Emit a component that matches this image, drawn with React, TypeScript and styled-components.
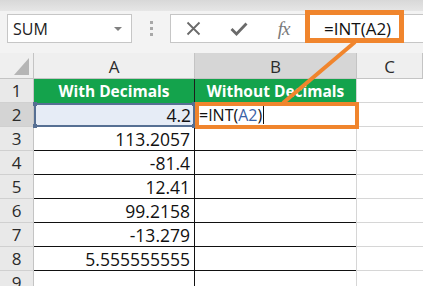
import React from 'react';
import styled, { createGlobalStyle } from 'styled-components';

const Global = createGlobalStyle`
  html, body { margin: 0; padding: 0; background: #fff; overflow: hidden; }
  body { font-family: "Open Sans", "Liberation Sans", sans-serif; }
`;

const ORANGE = '#f0852d';
const GREEN = '#14a34c';

const Screen = styled.div`
  position: relative;
  width: 423px;
  height: 286px;
  overflow: hidden;
  background: #fff;
  display: flex;
  flex-direction: column;
`;

const TopStrip = styled.div`
  height: 11px;
  flex: none;
  background: linear-gradient(#d8d8d8, #e6e6e6);
`;

const FormulaBar = styled.div`
  height: 42px;
  flex: none;
  box-sizing: border-box;
  padding-top: 3px;
  background: #f3f3f3;
  display: flex;
  align-items: flex-start;
`;

const NameBox = styled.div`
  margin-left: 7px;
  width: 125px;
  height: 29px;
  box-sizing: border-box;
  border: 1px solid #c6c6c6;
  background: #fff;
  display: flex;
  align-items: center;
  justify-content: space-between;
  padding: 0 9px 0 5px;
  font-size: 16px;
  color: #222;
`;

const DropArrow = styled.span`
  width: 0;
  height: 0;
  border-left: 4px solid transparent;
  border-right: 4px solid transparent;
  border-top: 4px solid #808080;
`;

const Grip = styled.div`
  width: 38px;
  height: 29px;
  display: flex;
  flex-direction: column;
  align-items: center;
  justify-content: center;
  gap: 3px;
`;

const Dot = styled.span`
  width: 3px;
  height: 3px;
  background: #a8a8a8;
`;

const FormulaBox = styled.div`
  flex: 1;
  height: 29px;
  box-sizing: border-box;
  border: 1px solid #c6c6c6;
  border-right: none;
  background: #fff;
  display: flex;
  align-items: center;
`;

const IconBtn = styled.div`
  width: 45px;
  height: 27px;
  display: flex;
  align-items: center;
  justify-content: center;
  color: #6e6e6e;
`;

const Fx = styled.span`
  font-family: "Liberation Serif", "DejaVu Serif", serif;
  font-style: italic;
  font-size: 19px;
  color: #7a7a7a;
  letter-spacing: -1px;
`;

const FormulaText = styled.div`
  padding-left: 18px;
  font-size: 17px;
  color: #111;
`;

const Sheet = styled.div`
  position: relative;
  flex: 1;
  display: grid;
  grid-template-columns: 34px 161px 162px 1fr;
  grid-template-rows: 26px;
  grid-auto-rows: 24px;
`;

const Corner = styled.div`
  position: relative;
  background: #efefef;
  border-right: 1px solid #c4c4c4;
  border-bottom: 1px solid #c4c4c4;
  box-sizing: border-box;
  &::after {
    content: '';
    position: absolute;
    right: 4px;
    bottom: 3px;
    width: 15px;
    height: 17px;
    background: #b5b5b5;
    clip-path: polygon(100% 0, 100% 100%, 0 100%);
  }
`;

const ColHead = styled.div<{ $sel?: boolean }>`
  box-sizing: border-box;
  background: ${(p) => (p.$sel ? '#d6d6d6' : '#efefef')};
  border-right: 1px solid #c4c4c4;
  border-bottom: 1px solid #c4c4c4;
  display: flex;
  align-items: center;
  justify-content: center;
  font-size: 17px;
  color: #2b2b2b;
  padding-top: 1px;
`;

const RowHead = styled.div<{ $sel?: boolean }>`
  box-sizing: border-box;
  background: ${(p) => (p.$sel ? '#d4d4d4' : '#e9e9e9')};
  border-right: 1px solid #c4c4c4;
  border-bottom: 1px solid #d0d0d0;
  display: flex;
  align-items: center;
  justify-content: center;
  font-size: 17px;
  color: #2b2b2b;
`;

const TitleCell = styled.div`
  box-sizing: border-box;
  background: ${GREEN};
  border-right: 1px solid #1d1d1d;
  color: #fff;
  font-weight: 700;
  font-size: 15.5px;
  display: flex;
  align-items: center;
  justify-content: center;
`;

const DataCell = styled.div`
  box-sizing: border-box;
  border-right: 1px solid #111;
  border-bottom: 1px solid #111;
  display: flex;
  align-items: center;
  justify-content: flex-end;
  padding-right: 4px;
  font-size: 17.5px;
  color: #111;
`;

const RefCell = styled.div`
  position: relative;
  box-sizing: border-box;
  background: #e6ecf6;
  border: 2px solid #566f93;
  display: flex;
  align-items: center;
  justify-content: flex-end;
  padding-right: 2px;
  font-size: 17.5px;
  color: #111;
`;

const Handle = styled.span<{ $x: 'left' | 'right'; $y: 'top' | 'bottom' }>`
  position: absolute;
  width: 4px;
  height: 4px;
  background: #566f93;
  ${(p) => p.$x}: -3px;
  ${(p) => p.$y}: -3px;
`;

const EditCell = styled.div`
  box-sizing: border-box;
  border-right: 1px solid #111;
  display: flex;
  align-items: center;
  padding-left: 4px;
  font-size: 16px;
  color: #111;
`;

const Ref = styled.span`
  color: #3a62a6;
`;

const Caret = styled.span`
  display: inline-block;
  width: 1px;
  height: 18px;
  background: #111;
  margin-left: 1px;
  vertical-align: middle;
`;

const EmptyCell = styled.div`
  box-sizing: border-box;
  border-bottom: 1px solid #d6d6d6;
  border-left: 1px solid #d6d6d6;
  margin-left: -1px;
`;

const EditBox = styled.div`
  position: absolute;
  left: 195px;
  top: 49px;
  width: 164px;
  height: 27px;
  box-sizing: border-box;
  border: 4px solid ${ORANGE};
  pointer-events: none;
`;

const FormulaCallout = styled.div`
  position: absolute;
  left: 305px;
  top: 10px;
  width: 99px;
  height: 33px;
  box-sizing: border-box;
  border: 5px solid ${ORANGE};
  pointer-events: none;
`;

const Leader = styled.svg`
  position: absolute;
  left: 0;
  top: 0;
  pointer-events: none;
`;

const values = ['113.2057', '-81.4', '12.41', '99.2158', '-13.279', '5.555555555'];

export default function App() {
  return (
    <>
      <Global />
      <Screen>
        <TopStrip />
        <FormulaBar>
          <NameBox>
            <span>SUM</span>
            <DropArrow />
          </NameBox>
          <Grip>
            <Dot />
            <Dot />
            <Dot />
          </Grip>
          <FormulaBox>
            <IconBtn>
              <svg width="15" height="15" viewBox="0 0 15 15">
                <path d="M1.5 1.5 L13.5 13.5 M13.5 1.5 L1.5 13.5" stroke="#6a6a6a" strokeWidth="1.8" fill="none" />
              </svg>
            </IconBtn>
            <IconBtn>
              <svg width="18" height="14" viewBox="0 0 18 14">
                <path d="M1.5 7 L6.5 12 L16.5 1.5" stroke="#6a6a6a" strokeWidth="2.8" fill="none" />
              </svg>
            </IconBtn>
            <IconBtn>
              <Fx>fx</Fx>
            </IconBtn>
            <FormulaText>=INT(A2)</FormulaText>
          </FormulaBox>
        </FormulaBar>
        <Sheet>
          <Corner />
          <ColHead>A</ColHead>
          <ColHead $sel>B</ColHead>
          <ColHead>C</ColHead>

          <RowHead>1</RowHead>
          <TitleCell>With Decimals</TitleCell>
          <TitleCell>Without Decimals</TitleCell>
          <EmptyCell />

          <RowHead $sel>2</RowHead>
          <RefCell>
            4.2
            <Handle $x="left" $y="top" />
            <Handle $x="right" $y="top" />
            <Handle $x="left" $y="bottom" />
            <Handle $x="right" $y="bottom" />
          </RefCell>
          <EditCell>
            =INT(<Ref>A2</Ref>)<Caret />
          </EditCell>
          <EmptyCell />

          {values.map((v, i) => (
            <React.Fragment key={v}>
              <RowHead>{i + 3}</RowHead>
              <DataCell>{v}</DataCell>
              <DataCell />
              <EmptyCell />
            </React.Fragment>
          ))}

          <RowHead>9</RowHead>
          <EditCell />
          <EditCell />
          <EmptyCell />
          <EditBox />
        </Sheet>
        <FormulaCallout />
        <Leader width="423" height="286" viewBox="0 0 423 286">
          <line x1="355" y1="42" x2="283" y2="103" stroke={ORANGE} strokeWidth="4" />
        </Leader>
      </Screen>
    </>
  );
}
